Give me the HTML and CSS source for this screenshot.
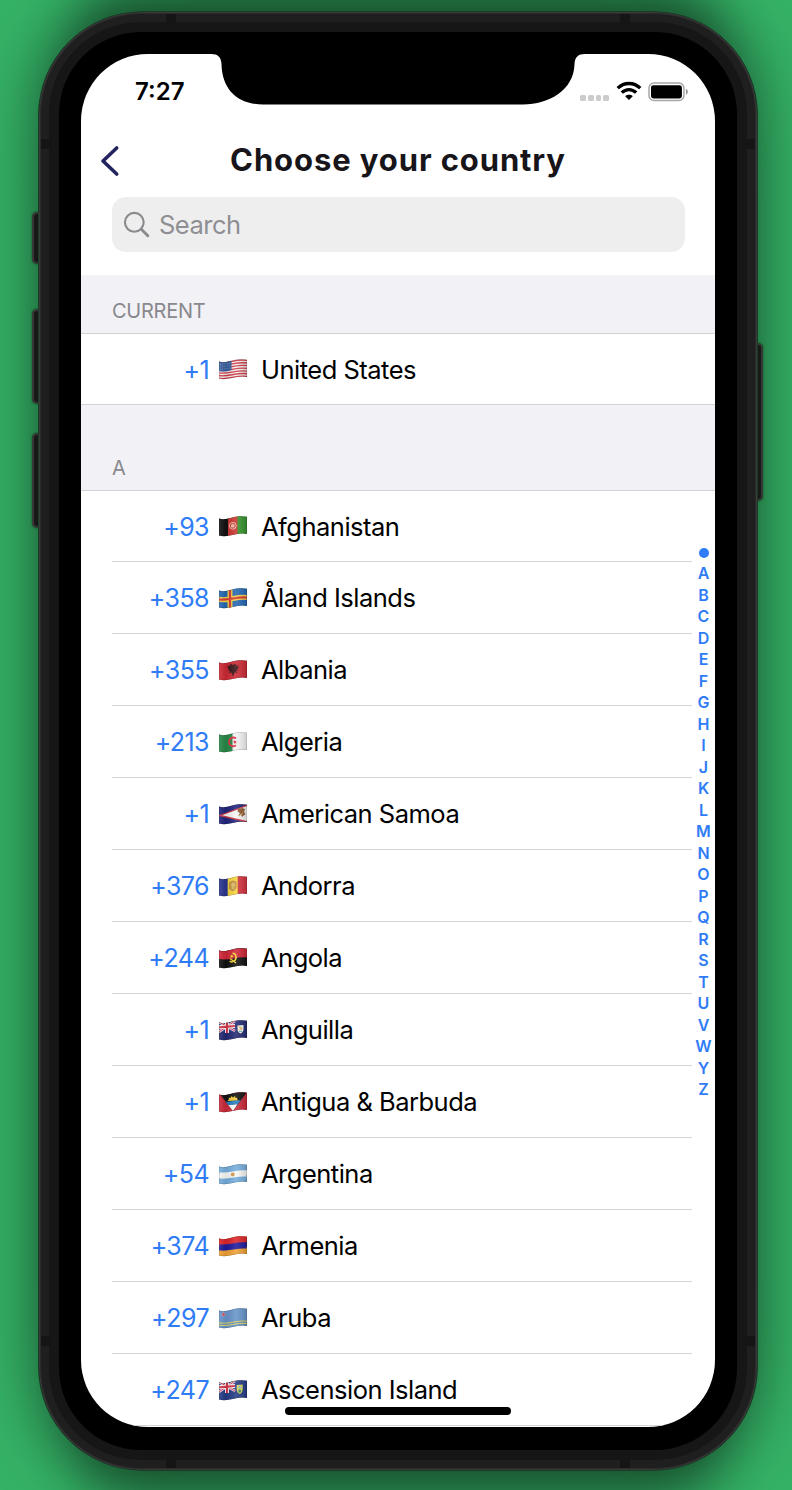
FILE: index.html
```html
<!DOCTYPE html>
<html lang="en">
<head>
<meta charset="utf-8">
<title>Choose your country</title>
<link rel="stylesheet" href="styles.css">
</head>
<body>
<svg class="defs" width="0" height="0" aria-hidden="true">
  <defs>
    <clipPath id="wave"><path d="M0 2.6C7 4.6 14 .6 20 .3C23 0 26 .2 28 .8V18C25 17.3 21 17.3 17 18.3C10 20 5 20.8 0 19.6Z"/></clipPath>
    <linearGradient id="sheen"><stop offset="0" stop-color="#fff" stop-opacity=".12"/><stop offset=".25" stop-color="#000" stop-opacity=".08"/><stop offset=".6" stop-color="#fff" stop-opacity=".12"/><stop offset="1" stop-color="#000" stop-opacity=".16"/></linearGradient>
    <g id="shade"><path fill="url(#sheen)" d="M0 0H28V21H0Z"/><path d="M0 2.6C7 4.6 14 .6 20 .3C23 0 26 .2 28 .8V18C25 17.3 21 17.3 17 18.3C10 20 5 20.8 0 19.6Z" fill="none" stroke="#000" stroke-opacity=".25" stroke-width=".8"/></g>
    <g id="union"><path fill="#26358c" d="M0 0H16V12H0Z"/><path d="M0 2L16 11M0 12L16 1" stroke="#f3e6ec" stroke-width="2.4"/><path d="M0 2L16 11M0 12L16 1" stroke="#d5384b" stroke-width="1"/><path d="M8 0V13M0 7.3L16 6" stroke="#fff" stroke-width="4"/><path d="M8 0V13M0 7.3L16 6" stroke="#d5384b" stroke-width="2.2"/></g>
  </defs>
</svg>
<div class="phone">
  <i class="key mute"></i><i class="key up"></i><i class="key down"></i><i class="key power"></i>
  <div class="shell">
    <i class="band tl"></i><i class="band tr"></i><i class="band bl"></i><i class="band br"></i>
    <i class="band lt"></i><i class="band lb"></i><i class="band rt"></i><i class="band rb"></i>
    <div class="rim"><div class="bezel">
      <main class="screen">
        <svg class="notch" width="376" height="52" viewBox="0 0 376 52"><path d="M0 0C7 0 10 3 10.500 10C11 36 27 50.500 52 50.500H312C338 50.500 363 36 363.500 10C364 3 367 0 374 0Z"/></svg>
        <div class="status">
          <span class="time">7:27</span>
          <span class="dots"><i></i><i></i><i></i><i></i></span>
          <svg class="wifi" width="26" height="20" viewBox="0 0 26 20"><g fill="none" stroke="#000" stroke-width="3.3"><path d="M1.700 7.200C8 .9 18 .9 24.300 7.200"/><path d="M5.800 11.700C10 7.500 16 7.500 20.200 11.700"/></g><path d="M9.200 15.200C11.300 13.300 14.700 13.300 16.800 15.200L13 19Z"/></svg>
          <svg class="battery" width="41" height="20" viewBox="0 0 41 20"><rect x="1" y="1" width="35" height="17.500" rx="5" fill="#fff" stroke="#a6a6a6" stroke-width="1.500"/><rect x="3" y="3.200" width="31" height="13.400" rx="2.500"/><path d="M38 6.800C40.600 7.800 40.600 11.700 38 12.700Z" fill="#999"/></svg>
        </div>
        <header class="nav">
          <svg class="back" width="20" height="32" viewBox="0 0 20 32"><path d="M16.700 3L3 16L16.700 29" fill="none" stroke="#23235f" stroke-width="3.600" stroke-linecap="round" stroke-linejoin="round"/></svg>
          <h1>Choose your country</h1>
        </header>
        <div class="search">
          <svg width="28" height="28" viewBox="0 0 28 28" fill="none" stroke="#8b8b8f" stroke-linecap="round"><circle cx="11.300" cy="11.300" r="9.400" stroke-width="2.100"/><path d="M18.300 18.300L24.800 24.800" stroke-width="2.900"/></svg>
          <span>Search</span>
        </div>
        <h2 class="section current">CURRENT</h2>
        <ul class="list only">
          <li><span class="code">+1</span><svg class="flag" viewBox="0 0 28 21"><g clip-path="url(#wave)"><path fill="#f8eeee" d="M0 0H28V21H0Z"/><g fill="none" stroke="#ce3b48" stroke-width="1.350"><path d="M0 3C9 5 17-.5 28 1.300"/><path d="M0 5.700C9 7.700 17 2.200 28 4"/><path d="M0 8.400C9 10.400 17 4.900 28 6.700"/><path d="M0 11.100C9 13.100 17 7.600 28 9.400"/><path d="M0 13.800C9 15.800 17 10.300 28 12.100"/><path d="M0 16.500C9 18.500 17 13 28 14.800"/><path d="M0 19.200C9 21.200 17 15.700 28 17.500"/></g><path d="M0 2C5 4 9 2 12.500 1.500V11C8 12.500 4 13 0 12.200Z" fill="#365d9c"/><path d="M1 5.500L12 4M1 8L12 6.500M1 10.500L12 9" stroke="#a7bddb" stroke-width=".7" stroke-dasharray=".7 1.200"/><use href="#shade"/></g></svg><span>United States</span></li>
        </ul>
        <h2 class="section letter">A</h2>
        <ul class="list">
          <li><span class="code">+93</span><svg class="flag" viewBox="0 0 28 21"><g clip-path="url(#wave)"><path fill="#111" d="M0 0H9.500V21H0Z"/><path fill="#c93530" d="M9 0H19V21H9Z"/><path fill="#37942d" d="M18.500 0H28V21H18.500Z"/><circle cx="13.800" cy="9.800" r="3.400" fill="none" stroke="#f2b8a8" stroke-width="1"/><path d="M12 11.500V9L13.800 7.500L15.500 9V11.500Z" fill="#f0b6a4"/><use href="#shade"/></g></svg><span>Afghanistan</span></li>
          <li><span class="code">+358</span><svg class="flag" viewBox="0 0 28 21"><g clip-path="url(#wave)" fill="none"><path fill="#2468b4" d="M0 0H28V21H0Z"/><path d="M11 0V21M0 11.300C9 13.300 18 8 28 9.500" stroke="#f4d345" stroke-width="5"/><path d="M11 0V21M0 11.300C9 13.300 18 8 28 9.500" stroke="#d83935" stroke-width="2.200"/><use href="#shade"/></g></svg><span>Åland Islands</span></li>
          <li><span class="code">+355</span><svg class="flag" viewBox="0 0 28 21"><g clip-path="url(#wave)"><path fill="#cd2933" d="M0 0H28V21H0Z"/><path d="M14 5L11.500 3.800L10.500 5.500L12 6.500L8 5.300L9.300 7.300L8 7.500L10 9.300L8.700 10.200L11 11L9.500 13.500L12.300 12.300L14 16.500L15.700 12.300L18.500 13.500L17 11L19.300 10.200L18 9.300L20 7.500L18.700 7L20 5L16 6.300L17.500 5L16 3.700Z" fill="#3a1418"/><use href="#shade"/></g></svg><span>Albania</span></li>
          <li><span class="code">+213</span><svg class="flag" viewBox="0 0 28 21"><g clip-path="url(#wave)"><path fill="#f3f4f3" d="M0 0H28V21H0Z"/><path fill="#278847" d="M0 0H13.500V21H0Z"/><path d="M17 6.500A4.300 4.300 0 1 0 17 13.300" fill="none" stroke="#dc3444" stroke-width="2"/><path d="M15 8.200L16.200 9.200L17.800 9L17 10.200L17.500 11.700L16 11L14.700 12L15 10.400L13.800 9.500L15 9.200Z" fill="#dc3444"/><use href="#shade"/></g></svg><span>Algeria</span></li>
          <li><span class="code">+1</span><svg class="flag" viewBox="0 0 28 21"><g clip-path="url(#wave)"><path fill="#20247b" d="M0 0H28V21H0Z"/><path d="M1 11.500L29 1V18Z" fill="#f7f5f5" stroke="#ce3543" stroke-width="1.300"/><path d="M19 5L23 4L26 5L25 8L26.500 10L23 13L22 10L19 12L21 9L18.500 7.500Z" fill="#8e5a32"/><path d="M20 12L24 9" stroke="#dfaa62"/><use href="#shade"/></g></svg><span>American Samoa</span></li>
          <li><span class="code">+376</span><svg class="flag" viewBox="0 0 28 21"><g clip-path="url(#wave)"><path fill="#29358f" d="M0 0H9V21H0Z"/><path fill="#f5d43b" d="M8.700 0H19V21H8.700Z"/><path fill="#d43340" d="M18.700 0H28V21H18.700Z"/><path d="M10.700 6.500L14 5L17 6V12L14 15L10.700 13Z" fill="#cc9f45" stroke="#b98143"/><path d="M12 9H16M14 7V13" stroke="#e5ce78"/><use href="#shade"/></g></svg><span>Andorra</span></li>
          <li><span class="code">+244</span><svg class="flag" viewBox="0 0 28 21"><g clip-path="url(#wave)"><path fill="#111" d="M0 0H28V21H0Z"/><path fill="#cf2638" d="M0 0H28V9.500C19 8 9 13 0 11Z"/><path d="M13.500 5.200C18 5.500 18 11 15 13C13.500 14.200 11.800 14 10.800 13M11 10.500L17 15" fill="none" stroke="#f1d332" stroke-width="1.500"/><circle cx="12.700" cy="8.300" r="1.200" fill="#f1d332"/><use href="#shade"/></g></svg><span>Angola</span></li>
          <li><span class="code">+1</span><svg class="flag" viewBox="0 0 28 21"><g clip-path="url(#wave)"><path fill="#242a73" d="M0 0H28V21H0Z"/><use href="#union"/><path d="M18.500 5.500L24.500 5V9C24.500 11.500 23 13 21.500 13.500C19.500 12.500 18.500 11 18.500 9Z" fill="#f4f2df"/><path d="M20 7L23 8.500L20.500 10" stroke="#d7a04d" fill="none"/><path d="M20 11.500H23" stroke="#69b5cc"/><use href="#shade"/></g></svg><span>Anguilla</span></li>
          <li><span class="code">+1</span><svg class="flag" viewBox="0 0 28 21"><g clip-path="url(#wave)"><path fill="#cb2938" d="M0 0H28V21H0Z"/><path fill="#111" d="M0 1L28 0L14 19Z"/><path fill="#f2ca3c" d="M8.500 9L10 7L9.700 5.500L11.500 6L12.500 4L14 5.500L16 4L16.500 6L18.500 5.500L18 7L19.500 8.500Z"/><path fill="#297dc2" d="M6.500 9.700C11 10 17 7.500 22 8.300L18.500 12.500L9.500 13.300Z"/><path fill="#fff" d="M9.300 13C12 13.200 15.500 12.200 18.500 12.200L14 19Z"/><use href="#shade"/></g></svg><span>Antigua &amp; Barbuda</span></li>
          <li><span class="code">+54</span><svg class="flag" viewBox="0 0 28 21"><g clip-path="url(#wave)"><path fill="#75aedd" d="M0 0H28V21H0Z"/><path d="M0 11.200C9 13.200 18 8 28 9.500" fill="none" stroke="#f7f7f5" stroke-width="6.200"/><circle cx="13.800" cy="10.400" r="1.900" fill="#d79c50"/><use href="#shade"/></g></svg><span>Argentina</span></li>
          <li><span class="code">+374</span><svg class="flag" viewBox="0 0 28 21"><g clip-path="url(#wave)"><path fill="#f0a134" d="M0 0H28V21H0Z"/><path fill="#dc2529" d="M0 0H28V7.500L0 9.500Z"/><path d="M0 11.200C9 13.200 18 8 28 9.500" fill="none" stroke="#1f1a9c" stroke-width="6.200"/><use href="#shade"/></g></svg><span>Armenia</span></li>
          <li><span class="code">+297</span><svg class="flag" viewBox="0 0 28 21"><g clip-path="url(#wave)"><path fill="#6795cb" d="M0 0H28V21H0Z"/><path d="M0 14.700C9 16.700 18 12 28 13.200M0 17C9 19 18 14.300 28 15.500" fill="none" stroke="#e6d857" stroke-width="1"/><path d="M4.500 4L5.200 5.800L7 6.300L5.300 7.200L4.700 9L3.900 7.300L2 6.700L3.800 5.900Z" fill="#dc3e4a" stroke="#f1c6d0" stroke-width=".3"/><use href="#shade"/></g></svg><span>Aruba</span></li>
          <li><span class="code">+247</span><svg class="flag" viewBox="0 0 28 21"><g clip-path="url(#wave)"><path fill="#253c86" d="M0 0H28V21H0Z"/><use href="#union"/><path d="M17.700 5L23.700 4.500V9C23.700 12 22 13.500 20.700 14C18.500 13 17.700 11 17.700 9Z" fill="#d9d75b"/><path d="M18.500 8L20.700 5.500L23 8" fill="#8bc3cf"/><path d="M19 11L20.700 9L22.500 11L20.700 13Z" fill="#3f8a5d"/><use href="#shade"/></g></svg><span>Ascension Island</span></li>
        </ul>
        <nav class="index"><b class="dot"></b><span>A</span><span>B</span><span>C</span><span>D</span><span>E</span><span>F</span><span>G</span><span>H</span><span>I</span><span>J</span><span>K</span><span>L</span><span>M</span><span>N</span><span>O</span><span>P</span><span>Q</span><span>R</span><span>S</span><span>T</span><span>U</span><span>V</span><span>W</span><span>Y</span><span>Z</span></nav>
        <i class="home"></i>
      </main>
    </div></div>
  </div>
</div>
</body>
</html>
```

FILE: styles.css
```css
* { box-sizing: border-box; }
body {
  margin: 0;
  height: 1490px;
  padding: 11px 0 0 38px;
  overflow: hidden;
  background: #35b266;
  font-family: Inter, "Liberation Sans", sans-serif;
  color: #000;
}
.defs { position: absolute; }
.phone { position: relative; width: 720px; height: 1460px; border-radius: 104px;
  box-shadow: 0 0 64px rgba(0,0,0,.5), 0 -70px 50px -34px rgba(0,0,0,.32), 0 70px 50px -34px rgba(0,0,0,.32); }
.shell { position: relative; height: 100%; padding: 10px; border-radius: 104px; background: #1f1f1f;
  border: 1px solid #173d25; box-shadow: inset 0 0 0 1px #3a3a3a, inset 0 0 0 2px #2a2a2a; }
.rim { height: 100%; padding: 10px; border-radius: 92px; background: #161616; }
.bezel { height: 100%; padding: 22px 0 0 22px; border-radius: 82px; background: #000; }
.screen { position: relative; height: 1373px; width: 634px; overflow: hidden; border-radius: 67px; background: #fff; }

/* antenna breaks in the frame */
.band { position: absolute; background: #151515; }
.tl, .tr { top: 2px; width: 10px; height: 10px; }
.bl, .br { bottom: 2px; width: 10px; height: 10px; }
.tl, .bl { left: 127px; }
.tr, .br { right: 127px; }
.lt, .lb { left: 2px; width: 10px; height: 10px; }
.rt, .rb { right: 2px; width: 10px; height: 10px; }
.lt, .rt { top: 127px; }
.lb, .rb { bottom: 124px; }

.key { position: absolute; left: -6px; width: 10px; background: #181818; border: 2px solid #363936; border-radius: 5px 0 0 5px; box-shadow: 0 0 2px #123d22; }
.mute { top: 201px; height: 52px; }
.up { top: 298px; height: 95px; }
.down { top: 422px; height: 95px; }
.power { left: auto; right: -5px; top: 332px; height: 158px; border-radius: 0 5px 5px 0; }

.notch { position: absolute; left: 130px; top: 0; }
.status { display: flex; height: 76px; padding: 26px 26px 0 54px; align-items: flex-start; }
.time { width: 446px; font-size: 24px; line-height: 24px; font-weight: 600; }
.dots { display: flex; gap: 2px; padding-top: 15px; width: 35px; }
.dots i { width: 5.700px; height: 6px; border-radius: 1.500px; background: #ccc; }
.wifi { margin: 1px 0 0 1px; }
.battery { margin: 2px 0 0 6px; }
.nav { display: grid; grid-template-columns: 20px 1fr 20px; height: 67px; padding: 0 19px; align-items: start; }
.back { margin-top: 15px; }
.nav h1 { margin: 10px 0 0; text-align: center; font-size: 31px; line-height: 40px; font-weight: 700; letter-spacing: .9px; color: #17151a; white-space: nowrap; }
.search { display: flex; align-items: center; gap: 8px; height: 55px; margin: 0 30px 23px 31px; padding-left: 11px; border-radius: 14px; background: #eee; color: #8e8e93; font-size: 25.500px; letter-spacing: -.500px; }
.section { margin: 0; padding-left: 31px; font-size: 20px; line-height: 24px; font-weight: 400; letter-spacing: -.250px; color: #88888d; background: #f2f1f6; border-bottom: 1px solid #d2d2d5; }
.current { height: 59px; padding-top: 24px; }
.letter { height: 86px; padding-top: 51px; }
.list { list-style: none; margin: 0; padding: 0 23px 0 31px; }
.list li { display: grid; grid-template-columns: 98px 28px 1fr; column-gap: 9px; align-items: center; height: 72px; padding-top: 1px; border-bottom: 1px solid #d6d6d8; font-size: 25.500px; line-height: 30px; letter-spacing: -.500px; white-space: nowrap; }
.list li:first-child { height: 71px; }
.list li > span:last-child { padding-left: 5px; }
.only { padding: 0; border-bottom: 1px solid #d2d2d5; }
.only li:first-child { height: 70px; margin: 0 23px 0 31px; border: 0; }
.list .code { text-align: right; padding-right: 1px; font-size: 25px; letter-spacing: -.550px; color: #2f7cf6; }
.flag { width: 28px; height: 21px; filter: drop-shadow(0 .500px .500px rgba(0,0,0,.2)); }
.index { position: absolute; right: 0; top: 489px; width: 23px; display: flex; flex-direction: column; align-items: center; color: #2f7cf6; font-size: 16px; font-weight: 600; line-height: 21.520px; }
.dot { width: 10px; height: 10px; margin: 5px 0 5px; border-radius: 50%; background: #2f7cf6; }
.home { position: absolute; left: 204px; top: 1353px; width: 226px; height: 8px; border-radius: 4px; background: #000; }
```
